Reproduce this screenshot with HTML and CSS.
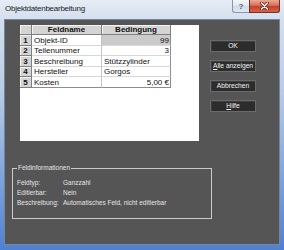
FILE: index.html
```html
<!DOCTYPE html>
<html lang="de">
<head>
    <meta charset="UTF-8">
    <title>Objektdatenbearbeitung</title>
    <link rel="stylesheet" href="styles.css">
</head>
<body>
    <div class="window">
        <div class="titlebar">
            <span class="title">Objektdatenbearbeitung</span>
            <span class="cap-btn cap-help">?</span>
            <span class="cap-btn cap-close">
                <svg width="9" height="8" viewBox="0 0 9 8">
                    <path d="M1.5 1 L7.5 7 M7.5 1 L1.5 7" stroke="#5b1f16" stroke-width="3" stroke-linecap="round"/>
                    <path d="M1.5 1 L7.5 7 M7.5 1 L1.5 7" stroke="#ffffff" stroke-width="1.5" stroke-linecap="round"/>
                </svg>
            </span>
        </div>
        <div class="client">
            <div class="top">
                <div class="grid-area">
                    <table class="grid">
                        <colgroup>
                            <col class="col-row">
                            <col class="col-name">
                            <col class="col-cond">
                        </colgroup>
                        <tr class="row-head">
                            <th class="corner"></th>
                            <th>Feldname</th>
                            <th>Bedingung</th>
                        </tr>
                        <tr class="row-tall">
                            <th>1</th>
                            <td>Objekt-ID</td>
                            <td class="num current">99</td>
                        </tr>
                        <tr class="row-short">
                            <th>2</th>
                            <td>Teilenummer</td>
                            <td class="num">3</td>
                        </tr>
                        <tr class="row-tall">
                            <th>3</th>
                            <td>Beschreibung</td>
                            <td>Stützzylinder</td>
                        </tr>
                        <tr class="row-short">
                            <th>4</th>
                            <td>Hersteller</td>
                            <td>Gorgos</td>
                        </tr>
                        <tr class="row-tall last">
                            <th>5</th>
                            <td>Kosten</td>
                            <td class="num">5,00 €</td>
                        </tr>
                    </table>
                </div>
                <div class="buttons">
                    <button class="button">OK</button>
                    <button class="button"><u>A</u>lle anzeigen</button>
                    <button class="button">Abbrechen</button>
                    <button class="button"><u>H</u>ilfe</button>
                </div>
            </div>
            <fieldset class="info">
                <legend>Feldinformationen</legend>
                <div class="info-row"><span class="info-label">Feldtyp:</span><span>Ganzzahl</span></div>
                <div class="info-row"><span class="info-label">Editierbar:</span><span>Nein</span></div>
                <div class="info-row"><span class="info-label">Beschreibung:</span><span>Automatisches Feld, nicht editierbar</span></div>
            </fieldset>
        </div>
    </div>
</body>
</html>
```

FILE: styles.css
```css
html, body {
    margin: 0;
    padding: 0;
}
body {
    font-family: "Liberation Sans", Arial, sans-serif;
    background: #5d8ad0;
}
.window {
    width: 284px;
    height: 250px;
    display: flex;
    flex-direction: column;
    background: linear-gradient(to bottom, #e6edf6 0, #d3dfee 20px, #b9cce6 90px, #83a8dc 170px, #4f80d2 250px);
}
.titlebar {
    height: 19px;
    flex-shrink: 0;
    display: flex;
    align-items: flex-start;
}
.title {
    flex: 1;
    padding-left: 5px;
    font-size: 8px;
    letter-spacing: -0.25px;
    line-height: 18px;
    color: #1b1b1b;
}
.cap-btn {
    height: 13px;
    box-sizing: border-box;
    display: flex;
    align-items: center;
    justify-content: center;
    border: 1px solid;
    border-top: 0;
}
.cap-help {
    width: 17px;
    border-color: #8797ad;
    border-right: 0;
    border-radius: 0 0 0 3px;
    background: linear-gradient(#f4f7fb, #dfe6f0 50%, #cfd9e7 50%, #e0e8f2);
    font-size: 8px;
    font-weight: bold;
    color: #4a5a6e;
}
.cap-close {
    width: 31px;
    margin-right: 4px;
    border-color: #74301f;
    border-radius: 0 0 3px 0;
    background: linear-gradient(#eaa896, #d7705a 45%, #c53f25 50%, #d2644c);
}
.client {
    flex: 1;
    margin: 0 4px 5px 4px;
    border: 1px solid #75879e;
    background: #555555;
}
.top {
    display: flex;
    padding: 5px 0 0 15px;
}
.grid-area {
    width: 179px;
    height: 116px;
    background: #ffffff;
}
.grid {
    border-collapse: separate;
    border-spacing: 0;
    table-layout: fixed;
    width: 151px;
    font-size: 8px;
    color: #101010;
}
.col-row {
    width: 12px;
}
.col-name {
    width: 70px;
}
.col-cond {
    width: 69px;
}
.row-head {
    height: 10px;
}
.row-tall {
    height: 11px;
}
.row-short {
    height: 10px;
}
.grid th,
.grid td {
    padding: 0;
    line-height: 9px;
    white-space: nowrap;
    overflow: hidden;
}
.grid th {
    background: #d4d4d4;
    border-right: 1px solid #808080;
    border-bottom: 1px solid #808080;
    box-shadow: inset 1px 1px 0 #f4f4f4;
    font-weight: bold;
    text-align: center;
}
.grid td {
    padding: 0 2px;
    border-right: 1px solid #c4c4c4;
    border-bottom: 1px solid #d8d8d8;
}
.grid td:last-child {
    border-right-color: #8c8c8c;
}
.grid .last td {
    border-bottom-color: #8c8c8c;
}
.grid td.num {
    text-align: right;
    padding-right: 1px;
}
.grid td.current {
    background: #cbcbcb;
}
.buttons {
    display: flex;
    flex-direction: column;
    gap: 8px;
    margin: 15px 0 0 11px;
}
.button {
    width: 46px;
    height: 12px;
    padding: 0;
    font-family: inherit;
    font-size: 6.7px;
    line-height: 10px;
    color: #f2f2f2;
    background: #2c2c2c;
    border: 1px solid #6a6a6a;
    box-shadow: inset 1px 1px 0 #3e3e3e;
}
.info {
    margin: 23px 0 0 7px;
    width: 200px;
    height: 55px;
    box-sizing: border-box;
    min-inline-size: 0;
    border: 1px solid #cacaca;
    padding: 6px 0 0 4px;
    font-size: 6.5px;
    color: #e6e6e6;
}
.info legend {
    padding: 0 1px;
    line-height: 8px;
}
.info-row {
    display: flex;
    line-height: 10px;
}
.info-label {
    width: 46px;
}
```
